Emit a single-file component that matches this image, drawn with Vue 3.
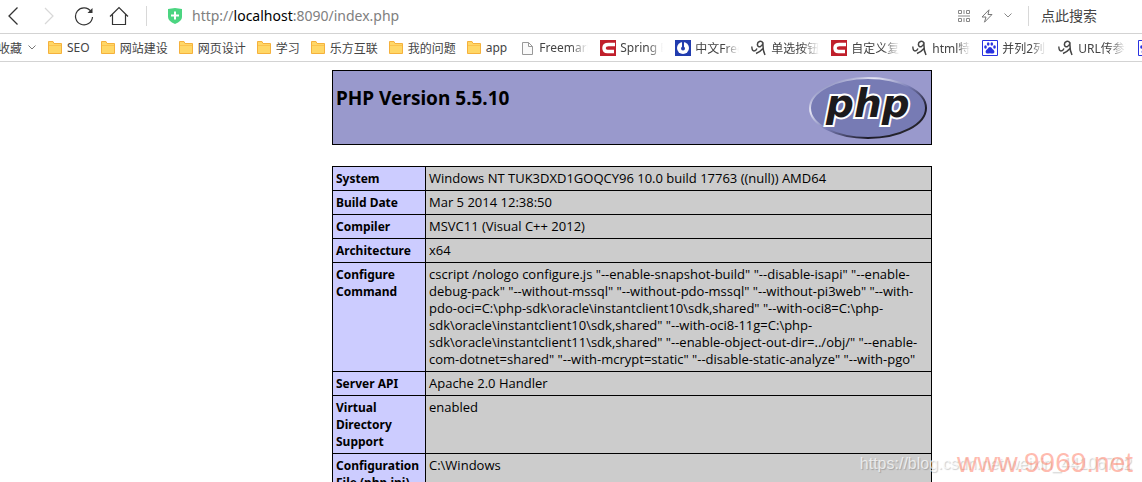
<script setup>
const folders = ['SEO', '网站建设', '网页设计', '学习', '乐方互联', '我的问题', 'app']
const sites = [
  { icon: 'page', text: 'Freemark', width: 49 },
  { icon: 'c', text: 'Spring B', width: 43 },
  { icon: 'power', text: '中文Free', width: 44 },
  { icon: 'script', text: '单选按钮', width: 48 },
  { icon: 'c', text: '自定义复选', width: 49 },
  { icon: 'script', text: 'html特殊', width: 38 },
  { icon: 'paw', text: '并列2列的', width: 44 },
  { icon: 'script', text: 'URL传参带', width: 48 },
  { icon: 'paw', text: '', width: 48 },
]
const rows = [
  ['System', 'Windows NT TUK3DXD1GOQCY96 10.0 build 17763 ((null)) AMD64'],
  ['Build Date', 'Mar 5 2014 12:38:50'],
  ['Compiler', 'MSVC11 (Visual C++ 2012)'],
  ['Architecture', 'x64'],
  ['Configure Command', 'cscript /nologo configure.js "--enable-snapshot-build" "--disable-isapi" "--enable-debug-pack" "--without-mssql" "--without-pdo-mssql" "--without-pi3web" "--with-pdo-oci=C:\\php-sdk\\oracle\\instantclient10\\sdk,shared" "--with-oci8=C:\\php-sdk\\oracle\\instantclient10\\sdk,shared" "--with-oci8-11g=C:\\php-sdk\\oracle\\instantclient11\\sdk,shared" "--enable-object-out-dir=../obj/" "--enable-com-dotnet=shared" "--with-mcrypt=static" "--disable-static-analyze" "--with-pgo"'],
  ['Server API', 'Apache 2.0 Handler'],
  ['Virtual Directory Support', 'enabled'],
  ['Configuration File (php.ini) Path', 'C:\\Windows'],
]
</script>

<template>
  <div class="browser">
    <header class="toolbar">
      <button class="tool" aria-label="Back"><svg width="20" height="20" viewBox="0 0 20 20"><path d="M13.500 1.500 5 10l8.500 8.500" fill="none" stroke="#333" stroke-width="1.300" /></svg></button>
      <button class="tool" aria-label="Forward"><svg width="20" height="20" viewBox="0 0 20 20"><path d="m6 2 8 8-8 8" fill="none" stroke="#d8d8d8" stroke-width="1.200" /></svg></button>
      <button class="tool" aria-label="Reload"><svg width="20" height="20" viewBox="0 0 20 20"><path d="M17 5.500A8.500 8.500 0 1 0 18.500 11" fill="none" stroke="#333" stroke-width="1.200" /><path d="M18.500 2v5H13.500Z" fill="#333" /></svg></button>
      <button class="tool" aria-label="Home"><svg width="20" height="20" viewBox="0 0 20 20"><path d="M1 10.500 10 1.500l9 9M3.500 8.500v10h13v-10" fill="none" stroke="#333" stroke-width="1.200" /></svg></button>
      <span class="rule"></span>
      <svg class="shield" width="14" height="16" viewBox="0 0 14 16"><path d="M0 1 7 0l7 1v8q0 4-7 7-7-3-7-7Z" fill="#4bd581" /><path d="M7 3.500v8M3 7.500h8" stroke="#fff" stroke-width="2" /></svg>
      <p class="url">http://<b>localhost</b>:8090/index.php</p>
      <button class="mini" aria-label="QR code"><svg width="12" height="12" viewBox="0 0 12 12"><path d="M.5.500h3v3h-3zM6 0v4M8.500.500h3v3h-3zM.5 8.500h3v3h-3zM6 8v4M8.500 8.500h3v3h-3zM0 6h12" fill="none" stroke="#888" /></svg></button>
      <button class="mini" aria-label="Speed mode"><svg width="12" height="14" viewBox="0 0 12 14"><path d="M8 .8 1 8h4l-1.500 5.200L11 5.500H7Z" fill="none" stroke="#777" stroke-linejoin="round" /></svg></button>
      <button class="mini" aria-label="More"><svg width="8" height="5" viewBox="0 0 8 5"><path d="m.5.500 3.500 3.500L7.500.500" fill="none" stroke="#888" /></svg></button>
      <span class="rule"></span>
      <button class="search">点此搜索</button>
    </header>

    <nav class="bookmarks">
      <button class="fav">收藏<svg width="8" height="5" viewBox="0 0 8 5"><path d="m.5.500 3.500 3.500L7.500.500" fill="none" stroke="#777" /></svg></button>
      <a v-for="f in folders" :key="f" href="#" class="folder">
        <svg width="14" height="13" viewBox="0 0 14 13"><path d="M.5.500h4.500l1 2h7.500v10H.5Z" fill="#ffd766" stroke="#f5b13c" /><path d="M1 4.500h12" stroke="#fbc24e" /></svg>{{ f }}
      </a>
      <a v-for="(s, i) in sites" :key="i" href="#" class="site">
        <svg v-if="s.icon === 'page'" width="16" height="16" viewBox="0 0 16 16"><path d="M3.500 2.500h6l4 4v8H3.500ZM9.500 2.500v4h4" fill="#fafafa" stroke="#999" /></svg>
        <svg v-else-if="s.icon === 'c'" width="16" height="16" viewBox="0 0 16 16"><path d="M0 0h16v16H0Z" fill="#c01f2b" /><path d="M15 4.500H8.500Q4 4.500 4 8t3.500 3.500H14" fill="none" stroke="#fff" stroke-width="3.500" /></svg>
        <svg v-else-if="s.icon === 'power'" width="16" height="16" viewBox="0 0 16 16"><path d="M0 0h16v16H0Z" fill="#213caf" /><circle cx="8" cy="8" r="6" fill="#fff" /><path d="M8 1v8" stroke="#213caf" stroke-width="2" /><circle cx="8" cy="8.500" r="2" fill="#213caf" /></svg>
        <svg v-else-if="s.icon === 'script'" width="16" height="16" viewBox="0 0 16 16"><path d="M.8 6.500Q1 11 3 11T6 8.500" fill="none" stroke="#444" stroke-width="1.400" /><path d="M12 3Q10.500.8 8.500 1.500 6 2.500 6.500 5t3 1.500Q11.500 5.500 12 2.500q-.5 8 2 12.500M12 8.500Q9 12 5 13.500" fill="none" stroke="#444" stroke-width="1.500" /></svg>
        <svg v-else width="16" height="16" viewBox="0 0 16 16"><path d="M.5.500h15v15H.5Z" fill="#fff" stroke="#2932e1" /><g fill="#2932e1"><ellipse cx="3.500" cy="7" rx="1.300" ry="1.700" /><ellipse cx="6.200" cy="4" rx="1.300" ry="1.800" /><ellipse cx="9.800" cy="4" rx="1.300" ry="1.800" /><ellipse cx="12.500" cy="7" rx="1.300" ry="1.700" /><path d="M8 7q1.500 0 2.500 2 2.800 2 1.500 4-1.300 1-4 .3-2.700.7-4-.3-1.300-2 1.500-4Q6.500 7 8 7Z" /></g></svg>
        <span class="label" :style="{ width: s.width + 'px' }">{{ s.text }}</span>
      </a>
    </nav>

    <main class="page">
      <div class="content">
        <section class="banner">
          <h1>PHP Version 5.5.10</h1>
          <svg class="logo" width="120" height="67" viewBox="0 0 120 67" role="img" aria-label="php">
            <defs><linearGradient id="rim" x1="0" y1="0" x2="1" y2="1"><stop offset="0.1" stop-color="#8286bb" /><stop offset=".28" stop-color="#e6e6f5" /><stop offset=".5" stop-color="#777bb4" /><stop offset=".75" stop-color="#1c1a28" /><stop offset="1" stop-color="#333" /></linearGradient></defs>
            <ellipse cx="60" cy="34" rx="58" ry="30" fill="#777bb4" stroke="url(#rim)" stroke-width="2" />
            <text class="wordmark" x="18" y="43">php</text>
          </svg>
        </section>
        <table>
          <tbody>
            <tr v-for="r in rows" :key="r[0]"><th scope="row">{{ r[0] }}</th><td>{{ r[1] }}</td></tr>
          </tbody>
        </table>
      </div>
    </main>
    <span class="blogmark">https://blog.csdn.net/weixin_44106702</span>
    <span class="sitemark">www.9969.net</span>
  </div>
</template>

<style>
body { margin: 0; overflow: hidden; }
</style>

<style scoped>
.browser { position: relative; height: 100vh; overflow: hidden; background: #fff; font-family: "Noto Sans", "Noto Sans CJK SC", sans-serif; color: #000; }
button { padding: 0; border: 0; background: none; font: inherit; color: inherit; }
svg { display: block; flex: none; }
.toolbar { display: flex; align-items: center; height: 34px; padding: 0 0 2px 4px; border-bottom: 1px solid #d3d3d3; box-sizing: border-box; }
.tool { width: 20px; margin-right: 15px; }
.rule { width: 1px; height: 20px; background: #d8d8d8; margin-left: 2px; }
.shield { margin-left: 21px; }
.url { flex: 1; margin: 0 0 0 10px; font-size: 14px; line-height: 20px; color: #808080; }
.url b { font-weight: 400; color: #000; }
.mini { margin-right: 11px; }
.mini + .rule { margin-left: 5px; }
.search { width: 101px; margin-left: 12px; text-align: left; font-size: 14px; line-height: 20px; color: #444; }
.bookmarks { display: flex; align-items: center; height: 28px; box-sizing: border-box; border-bottom: 1px solid #d3d3d3; font-size: 12px; color: #444; white-space: nowrap; overflow: hidden; }
.fav { display: flex; align-items: center; gap: 6px; margin-right: 12px; margin-left: -2px; }
a { display: flex; align-items: center; flex: none; color: inherit; text-decoration: none; }
.folder { gap: 5px; margin-right: 11px; }
.folder + .site { margin-left: 1px; }
.site { margin-right: 12px; gap: 4px; }
.label { overflow: hidden; mask-image: linear-gradient(to right, #000 65%, transparent); }
.page { padding: 8px 0 0 122px; }
.content { max-width: 600px; margin: 0 auto; }
.banner { display: flex; justify-content: space-between; box-sizing: border-box; height: 75px; border: 1px solid #000; background: #9999cc; padding: 3px; }
h1 { margin: 10px 0 0; font-size: 19px; line-height: 28px; font-weight: 700; }
.wordmark { font: italic 700 39px "DejaVu Sans", sans-serif; fill: #1c1a1c; stroke: #fff; stroke-width: 4px; paint-order: stroke; }
table { width: 100%; margin-top: 21px; border-collapse: collapse; font-size: 12px; line-height: 17px; }
th, td { border: 1px solid #000; padding: 3px; text-align: left; vertical-align: top; }
th { width: 86px; background: #ccccff; }
td { background: #cccccc; font-family: "Open Sans", sans-serif; font-size: 13px; }
.blogmark { position: absolute; right: 10px; bottom: 8px; font: 16px/20px "Liberation Sans", sans-serif; color: rgba(255, 255, 255, 0.7); text-shadow: 1px 1px 1px rgba(0, 0, 0, 0.2); }
.sitemark { position: absolute; right: 9px; bottom: 3px; font: 28px/32px "Liberation Sans", sans-serif; color: rgba(255, 120, 95, 0.5); }
</style>
